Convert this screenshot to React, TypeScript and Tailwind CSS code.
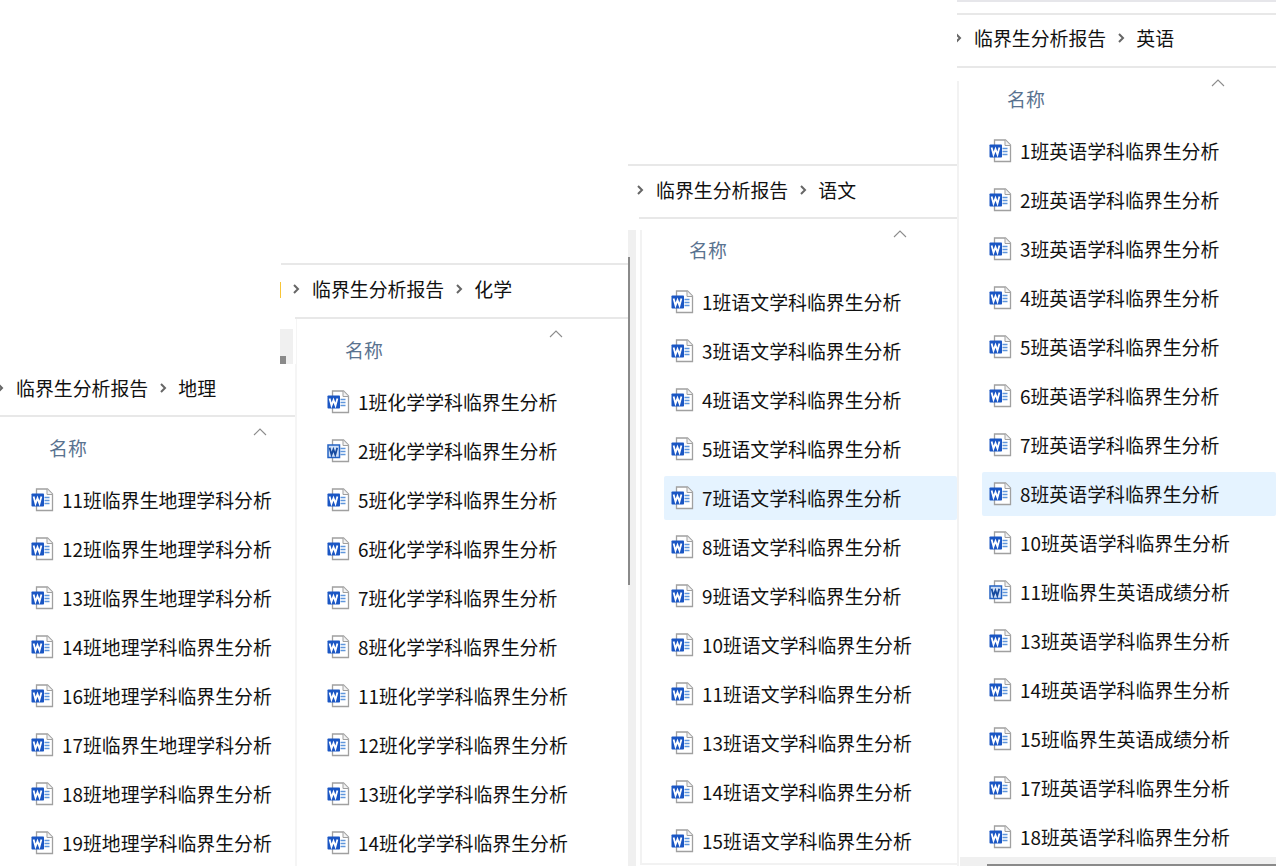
import React from "react";

type Row = { name: string; old?: boolean; active?: boolean };

const geo: Row[] = [
  { name: "11班临界生地理学科分析" },
  { name: "12班临界生地理学科分析" },
  { name: "13班临界生地理学科分析" },
  { name: "14班地理学科临界生分析" },
  { name: "16班地理学科临界生分析" },
  { name: "17班临界生地理学科分析" },
  { name: "18班地理学科临界生分析" },
  { name: "19班地理学科临界生分析" },
];
const chem: Row[] = [
  { name: "1班化学学科临界生分析" },
  { name: "2班化学学科临界生分析", old: true },
  { name: "5班化学学科临界生分析" },
  { name: "6班化学学科临界生分析" },
  { name: "7班化学学科临界生分析" },
  { name: "8班化学学科临界生分析" },
  { name: "11班化学学科临界生分析" },
  { name: "12班化学学科临界生分析" },
  { name: "13班化学学科临界生分析" },
  { name: "14班化学学科临界生分析" },
];
const chinese: Row[] = [
  { name: "1班语文学科临界生分析" },
  { name: "3班语文学科临界生分析" },
  { name: "4班语文学科临界生分析" },
  { name: "5班语文学科临界生分析" },
  { name: "7班语文学科临界生分析", active: true },
  { name: "8班语文学科临界生分析" },
  { name: "9班语文学科临界生分析" },
  { name: "10班语文学科临界生分析" },
  { name: "11班语文学科临界生分析" },
  { name: "13班语文学科临界生分析" },
  { name: "14班语文学科临界生分析" },
  { name: "15班语文学科临界生分析" },
];
const english: Row[] = [
  { name: "1班英语学科临界生分析" },
  { name: "2班英语学科临界生分析" },
  { name: "3班英语学科临界生分析" },
  { name: "4班英语学科临界生分析" },
  { name: "5班英语学科临界生分析" },
  { name: "6班英语学科临界生分析" },
  { name: "7班英语学科临界生分析" },
  { name: "8班英语学科临界生分析", active: true },
  { name: "10班英语学科临界生分析" },
  { name: "11班临界生英语成绩分析", old: true },
  { name: "13班英语学科临界生分析" },
  { name: "14班英语学科临界生分析" },
  { name: "15班临界生英语成绩分析" },
  { name: "17班英语学科临界生分析" },
  { name: "18班英语学科临界生分析" },
];

const WordIcon = ({ old }: { old?: boolean }) => (
  <svg width="23" height="24" viewBox="0 0 23 24" className="shrink-0">
    <path d="M5.5 1h11l5 5v16.5h-16z" fill="#fff" stroke="#a0a0a0" strokeWidth="1.3" />
    <path d="M16 1v5.5h5.5" fill="#f2f2f2" stroke="#a0a0a0" strokeWidth="1" />
    <path d="M13.5 9.5h5M13.5 12.5h5M13.5 15.5h5" stroke="#5f96dc" strokeWidth="1.3" />
    {old ? (
      <>
        <rect x="1" y="6" width="11.5" height="12.5" fill="#cfe0f8" stroke="#2463c4" strokeWidth="1.5" />
        <path d="M2.6 8.8l1.9 7 1.9-5.4 1.9 5.4 1.9-7" fill="none" stroke="#164a9f" strokeWidth="1.8" />
      </>
    ) : (
      <>
        <rect x="0.5" y="5.5" width="12.5" height="13" rx="0.8" fill="#1a56c4" />
        <path d="M2.6 8.6l1.9 7 2-5.4 2 5.4 1.9-7" fill="none" stroke="#fff" strokeWidth="1.8" />
      </>
    )}
  </svg>
);

const Chevron = ({ className }: { className: string }) => (
  <svg width="8" height="12" viewBox="0 0 8 12" className={className}>
    <path d="M2 2l4 4-4 4" fill="none" stroke="#666" strokeWidth="2" />
  </svg>
);

const Pane = ({
  folder,
  rows,
  className,
  inner,
  children,
}: {
  folder: string;
  rows: Row[];
  className: string;
  inner: string;
  children?: React.ReactNode;
}) => (
  <section className={`absolute overflow-hidden bg-white ${className}`}>
    {children}
    <div className={`relative ${inner}`}>
      <div className="flex h-[53px] items-center border-b-2 border-[#e8e8e8] pb-[6px] text-[#111]">
        <Chevron className="ml-[-3px] mr-[12px] shrink-0" />
        <span className="whitespace-nowrap">临界生分析报告</span>
        <Chevron className="ml-[11px] mr-[11px] shrink-0" />
        <span className="whitespace-nowrap">{folder}</span>
      </div>
      <div className="relative h-[61px] pl-[50px] pt-[18px] leading-[26px] text-[#5a7390]">
        名称
        <svg width="14" height="8" viewBox="0 0 14 8" className="absolute left-[254px] top-[11px]">
          <path d="M1 7l6-6 6 6" fill="none" stroke="#8c8c8c" strokeWidth="1.1" />
        </svg>
      </div>
      <ul className="ml-[25px] flex flex-col gap-[5px]">
        {rows.map((row) => (
          <li
            key={row.name}
            className={`flex h-[44px] items-center gap-[8px] rounded-[2px] pl-[7px] text-[#111] ${
              row.active ? "bg-[#e5f3ff]" : ""
            }`}
          >
            <WordIcon old={row.old} />
            <span className="whitespace-nowrap">{row.name}</span>
          </li>
        ))}
      </ul>
    </div>
  </section>
);

export default function App() {
  return (
    <div
      className="relative h-[866px] w-[1276px] overflow-hidden bg-white text-[18.9px] leading-[26px]"
      style={{ fontFamily: '"Noto Sans CJK SC", "Noto Sans", sans-serif' }}
    >
      <div className="absolute left-[957px] top-0 h-[2px] w-[319px] bg-[#e6e6ea]" />

      <Pane
        folder="英语"
        rows={english}
        className="left-[957px] top-[13px] h-[853px] w-[319px] border-t-2 border-[#e8e8e8]"
        inner="ml-0"
      >
        <div className="absolute bottom-0 left-0 top-[66px] w-[2px] bg-[#f2f2f2]" />
        <div className="absolute bottom-0 left-[3px] right-0 z-10 h-[9px] bg-[#f0f0f0]">
          <div className="absolute bottom-0 left-[27px] right-0 h-[2px] bg-[#8a8a8a]" />
        </div>
      </Pane>

      <Pane
        folder="语文"
        rows={chinese}
        className="left-[628px] top-[164px] h-[702px] w-[329px] border-t-2 border-[#e8e8e8]"
        inner="ml-[11px] [&>div:first-child]:pb-[4px]"
      >
        <div className="absolute bottom-0 left-0 top-[64px] w-[8px] bg-[#f0f0f0]" />
        <div className="absolute bottom-[1px] left-[12px] right-0 top-[64px] border-b-2 border-l-2 border-[#f2f2f2]" />
        <div className="absolute left-0 top-[91px] h-[328px] w-[2px] bg-[#8a8a8a]" />
      </Pane>

      <Pane
        folder="化学"
        rows={chem}
        className="left-[281px] top-[263px] h-[603px] w-[347px] border-t-2 border-[#e8e8e8]"
        inner="ml-[14px] mt-px"
      >
        <div className="absolute bottom-0 left-[15px] top-[54px] w-px bg-[#f5f5f5]" />
      </Pane>

      <div className="absolute left-[280px] top-[282px] h-[16px] w-[1px] bg-[#f8c537]" />
      <div className="absolute left-[280px] top-[329px] h-[35px] w-[13px] bg-[#f0f0f0]">
        <div className="absolute bottom-0 left-0 h-[8px] w-[6px] bg-[#8a8a8a]" />
      </div>

      <Pane
        folder="地理"
        rows={geo}
        className="left-0 top-[364px] h-[502px] w-[296px] border-r border-[#f5f5f5]"
        inner="ml-[-1px] [&>div:first-child]:pb-[4px]"
      />
    </div>
  );
}
